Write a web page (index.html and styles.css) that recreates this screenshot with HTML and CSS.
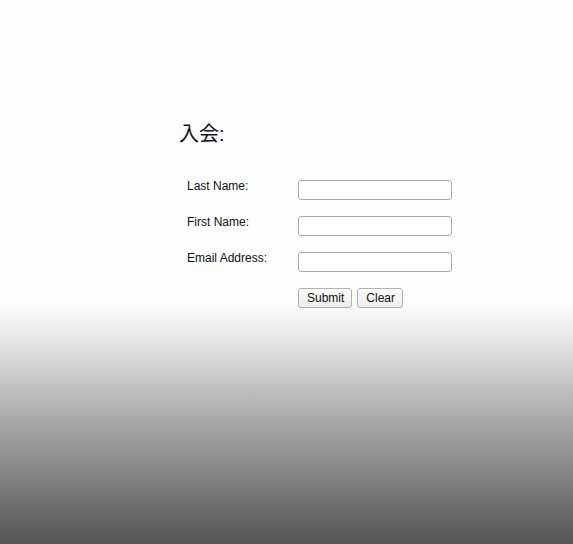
FILE: index.html
```html
<!DOCTYPE html>
<html lang="ja">
<head>
    <meta charset="UTF-8">
    <title>入会</title>
    <link rel="stylesheet" href="styles.css">
</head>
<body>
    <div class="container">
        <h1>入会:</h1>

        <form class="join-form">
            <label for="last_name">Last Name:</label>
            <input type="text" id="last_name" name="last_name">

            <label for="first_name">First Name:</label>
            <input type="text" id="first_name" name="first_name">

            <label for="email">Email Address:</label>
            <input type="text" id="email" name="email">

            <span></span>
            <div class="buttons">
                <button type="submit">Submit</button>
                <button type="reset">Clear</button>
            </div>
        </form>
    </div>
</body>
</html>
```

FILE: styles.css
```css
* {
    margin: 0;
    padding: 0;
    box-sizing: border-box;
}

html, body {
    height: 100%;
}

body {
    font-family: "Liberation Sans", Arial, "Noto Sans CJK JP", sans-serif;
    color: #111;
    background: linear-gradient(to bottom, #fdfdfd 0, #fdfdfd 302px, #e6e6e6 340px, #a9a9a9 420px, #7a7a7a 490px, #545454 544px);
}

.container {
    padding: 122px 0 0 179px;
}

h1 {
    font-size: 20px;
    font-weight: normal;
    line-height: 24px;
    margin-bottom: 34px;
}

.join-form {
    display: grid;
    grid-template-columns: 111px 154px;
    row-gap: 16px;
    margin-left: 8px;
}

label {
    font-size: 12px;
    line-height: 14px;
    margin-top: -1px;
}

input {
    height: 20px;
    border: 1px solid #a8a8a8;
    border-radius: 3px;
    background: #fff;
    font-size: 12px;
    padding: 0 3px;
}

.buttons {
    display: flex;
    gap: 5px;
}

button {
    height: 20px;
    padding: 0 7px 0 8px;
    font-family: inherit;
    font-size: 12px;
    color: #111;
    border: 1px solid #b2b2b2;
    border-radius: 3px;
    background: linear-gradient(to bottom, #fdfdfd, #ececec);
}
```
